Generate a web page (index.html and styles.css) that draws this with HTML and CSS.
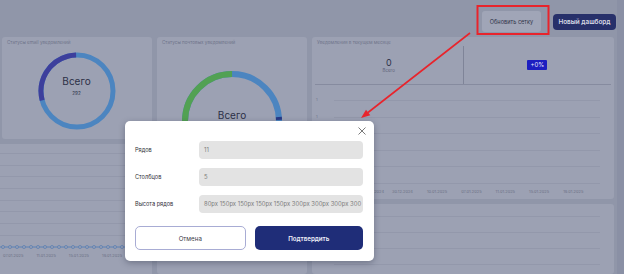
FILE: index.html
```html
<!DOCTYPE html>
<html lang="ru">
<head>
<meta charset="utf-8">
<title>Дашборд</title>
<link rel="stylesheet" href="styles.css">
</head>
<body>
<div class="page">
  <div class="content">
    <header class="topbar">
      <button class="btn-ghost">Обновить сетку</button>
      <button class="btn-navy">Новый дашборд</button>
    </header>
    <main class="grid">
      <section class="card card-a">
        <div class="card-title">Статусы email уведомлений</div>
        <div class="donut donut-1">
          <svg width="80" height="80" viewBox="0 0 80 80">
            <circle cx="40" cy="40" r="36" fill="none" stroke="#4c85c0" stroke-width="5"/>
            <circle cx="40" cy="40" r="36" fill="none" stroke="#3d3f9c" stroke-width="5" stroke-dasharray="65 400" transform="rotate(165 40 40)"/>
          </svg>
          <div class="donut-label"><span class="donut-big">Всего</span><span class="donut-num">292</span></div>
        </div>
      </section>
      <section class="card card-b">
        <div class="card-title">Статусы почтовых уведомлений</div>
        <div class="donut donut-2">
          <svg width="104" height="104" viewBox="0 0 104 104">
            <circle cx="52" cy="52" r="47" fill="none" stroke="#4c85c0" stroke-width="6"/>
            <circle cx="52" cy="52" r="47" fill="none" stroke="#52a153" stroke-width="6" stroke-dasharray="73.8 400" transform="rotate(180 52 52)"/>
            <circle cx="52" cy="52" r="47" fill="none" stroke="#283a86" stroke-width="6" stroke-dasharray="3 400" transform="rotate(355 52 52)"/>
          </svg>
          <div class="donut-label"><span class="donut-big">Всего</span><span class="donut-num">292</span></div>
        </div>
      </section>
      <section class="card card-c">
        <div class="card-title">Уведомления в текущем месяце</div>
        <div class="stats">
          <div class="stat"><span class="stat-num">0</span><span class="stat-cap">Всего</span></div>
          <div class="stat stat-right"><span class="badge">+0%</span></div>
        </div>
        <div class="chart">
          <div class="yaxis"><span>1</span><span>1</span><span></span><span></span><span></span></div>
          <div class="plot">
            <div class="gl"></div><div class="gl"></div><div class="gl"></div><div class="gl"></div><div class="gl"></div>
          </div>
        </div>
        <div class="xaxis xaxis-c">
          <span>.2024</span><span>30.12.2024</span><span>10.01.2025</span><span>07.01.2025</span><span>11.01.2025</span><span>15.01.2025</span><span>19.01.2025</span>
        </div>
      </section>
      <section class="card card-d">
        <div class="lines">
          <div class="gl"></div><div class="gl"></div><div class="gl"></div><div class="gl"></div>
          <div class="gl"></div><div class="gl"></div><div class="gl"></div><div class="gl"></div>
        </div>
        <div class="series">
          <svg width="150" height="6" viewBox="0 0 150 6">
            <line x1="0" y1="3" x2="150" y2="3" stroke="#5a80b4" stroke-width="1"/>
            <g fill="#9ca1b3" stroke="#5a80b4" stroke-width="0.8">
              <circle cx="3" cy="3" r="1.5"/><circle cx="10" cy="3" r="1.5"/><circle cx="17" cy="3" r="1.5"/><circle cx="24" cy="3" r="1.5"/><circle cx="31" cy="3" r="1.5"/><circle cx="38" cy="3" r="1.5"/><circle cx="45" cy="3" r="1.5"/><circle cx="52" cy="3" r="1.5"/><circle cx="59" cy="3" r="1.5"/><circle cx="66" cy="3" r="1.5"/><circle cx="73" cy="3" r="1.5"/><circle cx="80" cy="3" r="1.5"/><circle cx="87" cy="3" r="1.5"/><circle cx="94" cy="3" r="1.5"/><circle cx="101" cy="3" r="1.5"/><circle cx="108" cy="3" r="1.5"/><circle cx="115" cy="3" r="1.5"/><circle cx="122" cy="3" r="1.5"/><circle cx="129" cy="3" r="1.5"/><circle cx="136" cy="3" r="1.5"/><circle cx="143" cy="3" r="1.5"/>
            </g>
          </svg>
        </div>
        <div class="xaxis xaxis-d"><span>07.01.2025</span><span>11.01.2025</span><span>15.01.2025</span><span>19.01.2025</span></div>
      </section>
      <section class="card card-e"></section>
      <section class="card card-f">
        <div class="lines lines-f">
          <div class="gl"></div><div class="gl"></div><div class="gl"></div><div class="gl"></div>
        </div>
      </section>
    </main>
  </div>
  <div class="scrollbar"></div>
</div>

<div class="modal">
  <button class="close" aria-label="Закрыть">
    <svg width="8" height="8" viewBox="0 0 8 8"><path d="M0.5 0.5 L7.5 7.5 M7.5 0.5 L0.5 7.5" stroke="#6b6b6b" stroke-width="0.9" fill="none"/></svg>
  </button>
  <div class="form">
    <div class="row"><label>Рядов</label><div class="input">11</div></div>
    <div class="row"><label>Столбцов</label><div class="input">5</div></div>
    <div class="row"><label>Высота рядов</label><div class="input">80px 150px 150px 150px 150px 300px 300px 300px 300</div></div>
  </div>
  <div class="actions">
    <button class="btn-cancel">Отмена</button>
    <button class="btn-confirm">Подтвердить</button>
  </div>
</div>

<svg class="annot" width="624" height="274" viewBox="0 0 624 274">
  <rect x="477.5" y="6" width="71" height="28" fill="none" stroke="#e8242c" stroke-width="2"/>
  <line x1="470" y1="33" x2="368" y2="112.5" stroke="#e8242c" stroke-width="1.6"/>
  <polygon points="361,118 370.3,115.3 366,109.7" fill="#e8242c"/>
</svg>
</body>
</html>
```

FILE: styles.css
```css
* { box-sizing: border-box; }
html, body { margin: 0; padding: 0; }
body {
  width: 624px;
  height: 274px;
  overflow: hidden;
  background: #9096a9;
  font-family: Inter, "Noto Sans", sans-serif;
  position: relative;
}
button { font-family: inherit; border: 0; padding: 0; cursor: pointer; }

.page { display: flex; height: 274px; }
.content { width: 617px; display: flex; flex-direction: column; min-height: 0; }
.scrollbar { width: 7px; background: #8a90a5; }

.topbar {
  flex-shrink: 0;
  height: 37px;
  padding: 6px 1px 0 0;
  display: flex;
  justify-content: flex-end;
  align-items: center;
  gap: 12px;
}
.btn-ghost {
  width: 59px; height: 21px;
  background: #a0a5b7;
  color: #2f3449;
  font-size: 5.6px;
  border-radius: 3px;
}
.btn-navy {
  width: 63px; height: 16px;
  background: #27306a;
  color: #d9dbe6;
  font-size: 6.4px;
  font-weight: 600;
  border-radius: 4px;
}

.grid {
  flex: 1;
  min-height: 0;
  overflow: hidden;
  display: grid;
  grid-template-columns: 150px 150px 302px;
  grid-template-rows: 102px 55px minmax(0, 1fr);
  column-gap: 5px;
  row-gap: 5px;
  padding: 0 3px 0 2px;
}
.card {
  background: #9ca1b3;
  border-radius: 3px;
  position: relative;
  overflow: hidden;
  min-height: 0;
}
.card-title {
  font-size: 4.6px;
  line-height: 6px;
  color: #6f748a;
  padding: 3px 0 0 5px;
  white-space: nowrap;
}
.card-a { grid-column: 1; grid-row: 1; }
.card-b { grid-column: 2; grid-row: 1; }
.card-c { grid-column: 3; grid-row: 1 / 3; display: flex; flex-direction: column; }
.card-d { grid-column: 1; grid-row: 2 / 4; border-radius: 0 3px 0 0; margin-left: -2px; }
.card-e { grid-column: 2; grid-row: 2 / 4; }
.card-f { grid-column: 3; grid-row: 3; }

.donut { position: relative; display: flex; justify-content: center; }
.donut-1 { margin-top: 5px; margin-left: -1px; }
.donut-2 { margin-top: 23px; }
.donut-label {
  position: absolute;
  left: 0; right: 0;
  display: flex; flex-direction: column; align-items: center;
  color: #2c3047;
}
.donut-1 .donut-label { top: 24px; }
.donut-2 .donut-label { top: 40px; }
.donut-big { font-size: 10px; line-height: 12px; }
.donut-num { font-size: 4.6px; line-height: 7px; margin-top: 3px; }

.stats {
  flex-shrink: 0;
  display: flex;
  height: 39px;
  margin: 0 3px;
  border-bottom: 1px solid #868b9f;
}
.stat {
  flex: 1;
  display: flex; flex-direction: column; align-items: center; justify-content: center;
  color: #2c3047;
}
.stat-right { border-left: 1px solid #7f8498; }
.stat-num { font-size: 9px; line-height: 10px; }
.stat-cap { font-size: 4.4px; color: #5d6278; }
.badge {
  background: #1d1fc0;
  color: #e6e8ff;
  font-size: 6px;
  line-height: 10px;
  padding: 0 3px;
  border-radius: 1px;
}

.chart { flex-shrink: 0; display: flex; padding-top: 15px; }
.yaxis {
  width: 22px;
  display: flex; flex-direction: column;
  font-size: 4px; color: #70758a;
  padding-left: 4px;
}
.yaxis span { height: 16.5px; line-height: 8px; margin-top: -4px; margin-bottom: 4px; }
.plot { flex: 1; margin-right: 14px; display: flex; flex-direction: column; border-bottom: 1px solid #9398ab; }
.gl { height: 16.5px; border-top: 1px solid #9398ab; }
.xaxis {
  display: flex;
  font-size: 4px;
  color: #6c7186;
  white-space: nowrap;
}
.xaxis-c { padding-left: 61px; gap: 14px; margin-top: 5px; }
.xaxis-c span:first-child { margin-right: -6px; }

.lines { display: flex; flex-direction: column; padding-top: 9px; margin-right: 10px; }
.lines .gl { height: 11.7px; }
.series { margin-top: -3px; }
.series svg { display: block; }
.xaxis-d { padding-left: 3px; gap: 13px; margin-top: 3px; }

.lines-f { padding-top: 12px; margin: 0 14px 0 22px; }
.lines-f .gl { height: 16px; }

.modal {
  position: absolute;
  left: 125px; top: 121px;
  width: 249px; height: 140px;
  background: #ffffff;
  border-radius: 5px;
  box-shadow: 0 2px 6px rgba(30, 34, 55, 0.35);
  padding: 20px 11px 0 10px;
}
.close {
  position: absolute;
  right: 8px; top: 6px;
  width: 8px; height: 8px;
  background: none;
  display: flex;
}
.form { display: flex; flex-direction: column; gap: 9px; }
.row { display: flex; align-items: center; }
.row label {
  width: 64px;
  font-size: 5.6px;
  color: #2f2f38;
}
.input {
  flex: 1;
  height: 18px;
  background: #e3e3e3;
  border-radius: 4px;
  font-size: 5.9px;
  color: #7c7c7c;
  line-height: 18px;
  padding-left: 5px;
  white-space: nowrap;
  overflow: hidden;
}
.actions { display: flex; gap: 9px; margin-top: 13px; }
.actions button { flex: 1; height: 24px; border-radius: 5px; font-size: 6.2px; }
.btn-cancel {
  background: #ffffff;
  border: 1px solid #a8acd4;
  color: #3a3a46;
}
.btn-confirm {
  background: #1f2d78;
  color: #f0f1f8;
  font-weight: 600;
}

.annot { position: absolute; left: 0; top: 0; pointer-events: none; }
```
